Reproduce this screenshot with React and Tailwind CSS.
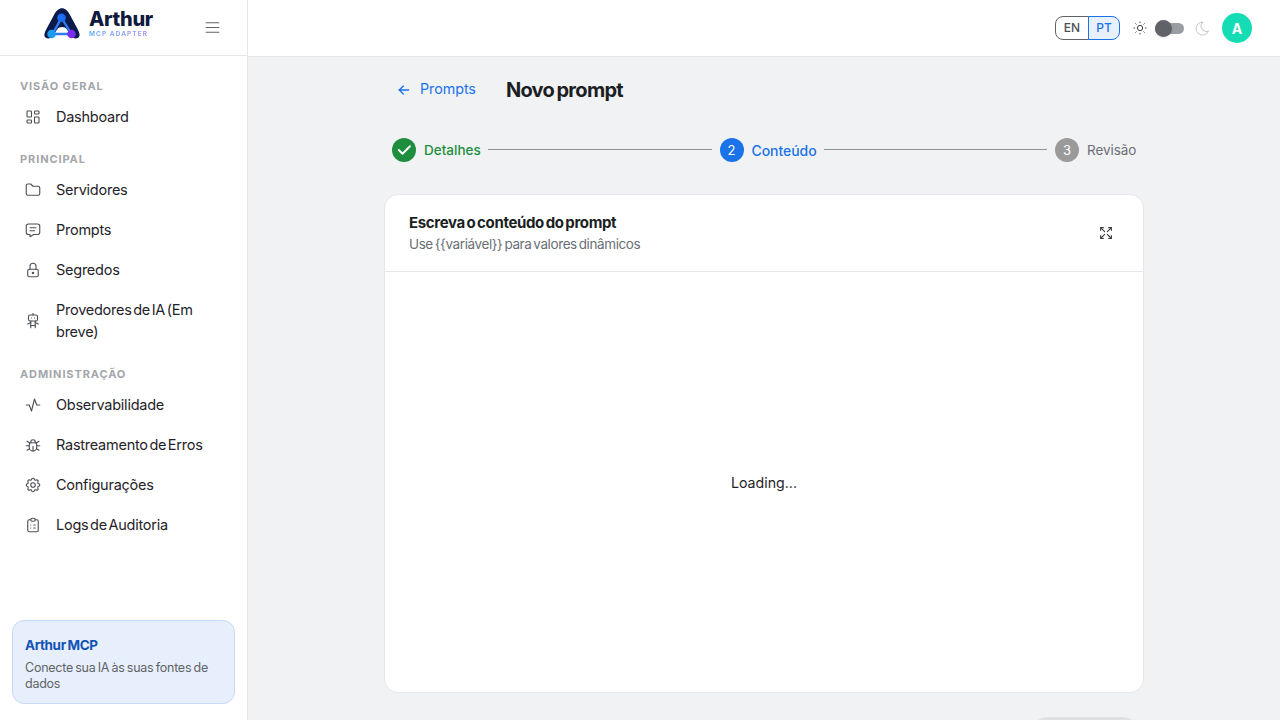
import React from "react";
import { TbLayoutDashboard, TbFolder, TbMessage, TbLock, TbRobot, TbActivity, TbBug, TbSettings, TbClipboardList, TbMenu2, TbArrowLeft, TbCheck, TbArrowsMaximize, TbSun, TbMoon } from "react-icons/tb";

function Item({ icon: Icon, children }) {
  return (
    <div className="flex items-center min-h-10 pl-[12px] pr-2 py-[9px]">
      <span className="w-[32px] shrink-0"><Icon size={18} strokeWidth={1.5} className="text-[#4b5157]" /></span>
      <span className="text-[14.5px] leading-[22px] text-[#1f2329] tracking-[-0.25px] [word-spacing:-2.2px]">{children}</span>
    </div>
  );
}

function Section({ children, mt }) {
  return <div className={`text-[11px] leading-[16px] font-bold tracking-[0.9px] text-[#a3a6aa] px-[8px] mb-[3px] ${mt}`}>{children}</div>;
}

function Logo() {
  return (
    <div className="flex items-center">
      <svg width="38" height="32" viewBox="0 0 40 33" className="mt-[-7px] ml-[-1px]">
        <path d="M3 31 C0 29 2 25 4 21 L11 8 C14 2 17 0 20 0 C23 0 26 2 29 8 L36 21 C38 25 40 29 37 31 C34 33 31 31 29 28 L25 22 C23 19 17 19 15 22 L11 28 C9 31 6 33 3 31 Z" fill="#0b1a4a" />
        <path d="M19.5 10 L10 27 L30 27 Z" fill="none" stroke="#2b7cf0" strokeWidth="2.5" />
        <circle cx="19.5" cy="10" r="4.5" fill="#1f6df0" />
        <circle cx="9" cy="27" r="4.5" fill="#1d9bf0" />
        <circle cx="30" cy="27" r="4.5" fill="#7c2cf0" />
      </svg>
      <div className="ml-[8px] flex flex-col mt-[-7px]">
        <span className="font-extrabold text-[20px] leading-[19px] text-[#101a3f] tracking-[-0.3px]">Arthur</span>
        <span className="mt-[2px] font-bold text-[6.5px] leading-[7px] tracking-[1.05px] bg-gradient-to-r from-[#5aaef7] to-[#a78bfa] bg-clip-text text-transparent">MCP ADAPTER</span>
      </div>
    </div>
  );
}

export default function App() {
  return (
    <div className="flex h-screen w-full overflow-hidden bg-[#f1f2f4] font-['Inter',sans-serif]">
      <aside className="w-[248px] shrink-0 bg-white border-r border-[#e5e7eb] flex flex-col">
        <div className="h-[56px] shrink-0 border-b border-[#e5e7eb] flex items-center pl-[44px] pr-[25px] justify-between">
          <Logo />
          <TbMenu2 size={19} strokeWidth={1.5} className="text-[#5f6368]" />
        </div>
        <nav className="flex-1 px-[12px] pt-[22px]">
          <Section>VISÃO GERAL</Section>
          <Item icon={TbLayoutDashboard}>Dashboard</Item>
          <Section mt="mt-[14px]">PRINCIPAL</Section>
          <Item icon={TbFolder}>Servidores</Item>
          <Item icon={TbMessage}>Prompts</Item>
          <Item icon={TbLock}>Segredos</Item>
          <Item icon={TbRobot}>Provedores de IA (Em breve)</Item>
          <Section mt="mt-[14px]">ADMINISTRAÇÃO</Section>
          <Item icon={TbActivity}>Observabilidade</Item>
          <Item icon={TbBug}>Rastreamento de Erros</Item>
          <Item icon={TbSettings}>Configurações</Item>
          <Item icon={TbClipboardList}>Logs de Auditoria</Item>
        </nav>
        <div className="mx-[12px] mb-[16px] h-[84px] rounded-[12px] border border-[#c9d8f8] bg-[#e7effc] px-[12px] pt-[14px]">
          <div className="text-[13.5px] leading-[20px] font-bold text-[#1253b5] tracking-[-0.4px] [word-spacing:-1px]">Arthur MCP</div>
          <div className="mt-[5px] text-[12.5px] leading-[16px] text-[#5f6368] tracking-[-0.25px] [word-spacing:-1px]">Conecte sua IA às suas fontes de dados</div>
        </div>
      </aside>
      <div className="flex-1 min-w-0 flex flex-col">
        <header className="h-[57px] shrink-0 bg-white border-b border-[#e5e7eb] flex items-center justify-end pr-[28px]">
          <div className="flex h-[24px] text-[12px] font-medium">
            <span className="w-[34px] flex items-center justify-center rounded-l-[8px] border border-[#5f6368] text-[#4b5157]">EN</span>
            <span className="w-[32px] ml-[-1px] flex items-center justify-center rounded-r-[8px] border border-[#1a73e8] bg-[#e8f0fe] text-[#1a73e8]">PT</span>
          </div>
          <TbSun size={16} strokeWidth={1.5} className="ml-[12px] text-[#3c4043]" />
          <div className="relative ml-[7px] w-[29px] h-[11px] rounded-full bg-[#9a9da1]">
            <div className="absolute left-0 top-[-3px] w-[17px] h-[17px] rounded-full bg-[#5f6368] shadow-sm" />
          </div>
          <TbMoon size={17} strokeWidth={1.5} className="ml-[10px] text-[#c9cbce]" />
          <div className="ml-[11px] w-[30px] h-[30px] rounded-full bg-[#14dcb4] text-white flex items-center justify-center text-[14px] font-bold">A</div>
        </header>
        <main className="flex-1 min-h-0 w-[760px] ml-[136px]">
          <div className="flex items-center h-[22px] mt-[22px] ml-[12px]">
            <TbArrowLeft size={16} strokeWidth={2} className="text-[#1a73e8]" />
            <span className="ml-[8px] mt-[-2px] text-[14.3px] tracking-[-0.05px] text-[#1a73e8]">Prompts</span>
            <h1 className="ml-[30px] text-[20px] font-bold text-[#1b1f24] tracking-[-0.7px] [word-spacing:-1.7px]">Novo prompt</h1>
          </div>
          <div className="flex items-center h-[24px] mt-[37px] pl-[8px] pr-[8px]">
            <span className="w-[24px] h-[24px] rounded-full bg-[#1e8e3e] flex items-center justify-center text-white"><TbCheck size={18} strokeWidth={2.5} /></span>
            <span className="ml-[8px] w-[56px] text-[13.5px] font-medium text-[#1e8e3e] whitespace-nowrap">Detalhes</span>
            <div className="flex-1 h-px bg-[#8f9297] mx-[8px] mt-[-1px]" />
            <span className="w-[24px] h-[24px] rounded-full bg-[#1a73e8] flex items-center justify-center text-white text-[13px] pt-px">2</span>
            <span className="ml-[8px] w-[64px] text-[14px] font-medium text-[#1a73e8] tracking-[-0.05px] whitespace-nowrap">Conteúdo</span>
            <div className="flex-1 h-px bg-[#8f9297] mx-[8px] mt-[-1px]" />
            <span className="w-[24px] h-[24px] rounded-full bg-[#9a9a9a] flex items-center justify-center text-white text-[13px] pt-px">3</span>
            <span className="ml-[8px] w-[49px] text-[13.5px] tracking-[-0.05px] text-[#6b6f75] whitespace-nowrap">Revisão</span>
          </div>
          <section className="mt-[32px] h-[499px] bg-white rounded-[14px] border border-[#e6e7ea] flex flex-col">
            <div className="h-[77px] shrink-0 border-b border-[#e6e7ea] px-[24px] pt-[17px] flex justify-between">
              <div>
                <div className="text-[15px] leading-[22px] font-bold text-[#1b1f24] tracking-[-0.35px] [word-spacing:-1.5px]">Escreva o conteúdo do prompt</div>
                <div className="text-[13.5px] leading-[20px] text-[#6b6f75] tracking-[-0.4px] [word-spacing:-1.5px]">Use {"{{variável}}"} para valores dinâmicos</div>
              </div>
              <TbArrowsMaximize size={16} strokeWidth={1.75} className="text-[#3c4043] mt-[13px] mr-[5px]" />
            </div>
            <div className="flex-1 flex items-center justify-center text-[14.2px] text-[#1f2329] pt-[2px]">Loading...</div>
          </section>
          <div className="flex justify-end mt-[24px] pr-[4px]">
            <div className="w-[110px] h-[36px] rounded-[18px] bg-[#dfe0e2]" />
          </div>
        </main>
      </div>
    </div>
  );
}
